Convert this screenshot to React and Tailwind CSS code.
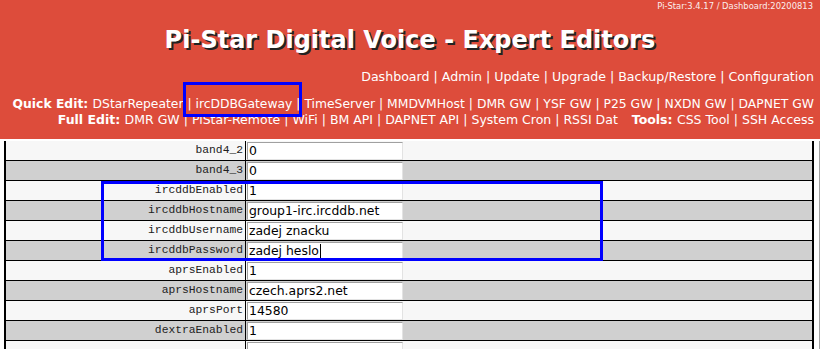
import React from 'react';

const ROWS = [
  { key: 'band4_2', value: '0' },
  { key: 'band4_3', value: '0' },
  { key: 'ircddbEnabled', value: '1' },
  { key: 'ircddbHostname', value: 'group1-irc.ircddb.net' },
  { key: 'ircddbUsername', value: 'zadej znacku' },
  { key: 'ircddbPassword', value: 'zadej heslo', caret: true },
  { key: 'aprsEnabled', value: '1' },
  { key: 'aprsHostname', value: 'czech.aprs2.net' },
  { key: 'aprsPort', value: '14580' },
  { key: 'dextraEnabled', value: '1' },
  { key: '', value: '' },
];

const NAV = ['Dashboard', 'Admin', 'Update', 'Upgrade', 'Backup/Restore', 'Configuration'];
const QUICK = ['DStarRepeater', 'ircDDBGateway', 'TimeServer', 'MMDVMHost', 'DMR GW', 'YSF GW', 'P25 GW', 'NXDN GW', 'DAPNET GW'];
const FULL = ['DMR GW', 'PiStar-Remote', 'WiFi', 'BM API', 'DAPNET API', 'System Cron', 'RSSI Dat'];
const TOOLS = ['CSS Tool', 'SSH Access'];

function Links({ items }) {
  return items.map((label, i) => (
    <span key={label}>
      {i > 0 && ' | '}
      <a className="text-white">{label}</a>
    </span>
  ));
}

export default function App() {
  return (
    <div className="relative w-[820px] h-[349px] overflow-hidden bg-white font-['DejaVu_Sans',Verdana,sans-serif]">
      {/* header */}
      <div className="h-[139px] bg-[#dd4c3b] text-white">
        <div className="h-[14px] pr-[7px] text-right text-[8.4px] leading-[13px] text-[#fbeeee]">
          Pi-Star:3.4.17 / Dashboard:20200813
        </div>
        <h1 className="h-[52px] text-center text-[24px] font-bold leading-[52px] [text-shadow:2px_2px_0_#222]">
          Pi-Star Digital Voice - Expert Editors
        </h1>
        <div className="h-[22px] pr-[6px] text-right text-[12.6px] leading-[22px]">
          <Links items={NAV} />
        </div>
        <div className="mt-[8px] pr-[6px] text-right text-[12.35px] leading-[16px] whitespace-nowrap">
          <b>Quick Edit: </b>
          <Links items={QUICK} />
        </div>
        <div className="pr-[6px] text-right text-[12.5px] leading-[16px] whitespace-nowrap">
          <b>Full Edit: </b>
          <Links items={FULL} />
          <span className="inline-block w-[14px]" />
          <b>Tools: </b>
          <Links items={TOOLS} />
        </div>
      </div>

      {/* config table */}
      <div className="flex mt-[2px]">
        <div className="ml-[4px] w-[810px] border-x-2 border-black">
          {ROWS.map((row, i) => (
            <div
              key={i}
              className={`flex h-[20px] border-b border-black ${i % 2 ? 'bg-[#d0d0d0]' : 'bg-[#f7f7f7]'}`}
            >
              <div className="w-[240px] shrink-0 border-r border-black pr-[2px] text-right font-['Liberation_Mono',monospace] text-[11.3px] leading-[19px] text-[#222]">
                {row.key}
              </div>
              <div className="pl-[1px] pt-[1px]">
                <div className="flex h-[18px] w-[156px] items-center border border-[#e3e3e3] border-t-[#a0a0a0] border-l-[#a0a0a0] bg-white pl-[1px] text-[12.4px] text-black">
                  {row.value}
                  {row.caret && <span className="ml-[1px] h-[15px] w-px bg-black" />}
                </div>
              </div>
            </div>
          ))}
        </div>
        <div className="ml-[5px] w-px h-[210px] bg-[#a0a0a0]" />
      </div>

      {/* annotation boxes */}
      <div className="absolute left-[183px] top-[82px] w-[119px] h-[35px] border-[3px] border-[#0000ff]" />
      <div className="absolute left-[101px] top-[181px] w-[502px] h-[80px] border-[3px] border-[#0000ff]" />
    </div>
  );
}
